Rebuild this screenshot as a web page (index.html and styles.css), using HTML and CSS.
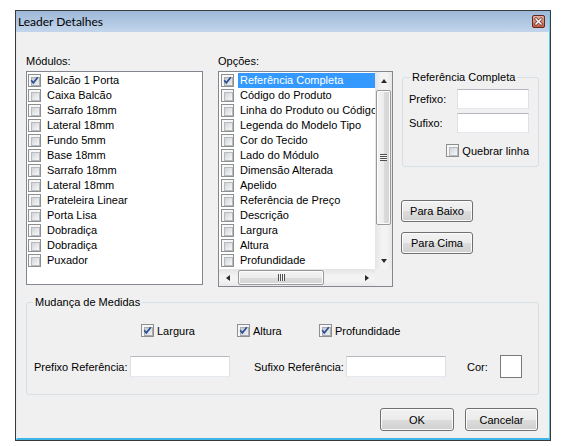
FILE: index.html
```html
<!DOCTYPE html>
<html lang="pt">
<head>
<meta charset="utf-8">
<title>Leader Detalhes</title>
<link rel="stylesheet" href="styles.css">
</head>
<body>
<div class="window">
  <div class="titlebar">
    <span class="title">Leader Detalhes</span>
    <span class="close">
      <svg width="13" height="13" viewBox="0 0 13 13">
        <defs>
          <linearGradient id="cg" x1="0" y1="0" x2="0" y2="1">
            <stop offset="0" stop-color="#e7b0a2"/>
            <stop offset="0.5" stop-color="#d98a75"/>
            <stop offset="1" stop-color="#c4563e"/>
          </linearGradient>
        </defs>
        <rect x="0.5" y="0.5" width="12" height="12" rx="1.5" fill="url(#cg)" stroke="#5e2a20"/>
        <path d="M4 4 L9 9 M9 4 L4 9" stroke="#6a3a30" stroke-width="3" stroke-linecap="square"/>
        <path d="M4 4 L9 9 M9 4 L4 9" stroke="#ffffff" stroke-width="1.5" stroke-linecap="square"/>
      </svg>
    </span>
  </div>
  <div class="client">
    <div class="top">
      <div class="col-mod">
        <div class="label">Módulos:</div>
        <div class="list list-mod">
          <div class="item"><span class="cb checked"><svg class="tick" width="13" height="13" viewBox="0 0 13 13"><path d="M3.2 6.3 L5.3 8.8 L9.8 3.2" fill="none" stroke="#2c4f93" stroke-width="1.7"/></svg></span><span class="txt">Balcão 1 Porta</span></div>
          <div class="item"><span class="cb"></span><span class="txt">Caixa Balcão</span></div>
          <div class="item"><span class="cb"></span><span class="txt">Sarrafo 18mm</span></div>
          <div class="item"><span class="cb"></span><span class="txt">Lateral 18mm</span></div>
          <div class="item"><span class="cb"></span><span class="txt">Fundo 5mm</span></div>
          <div class="item"><span class="cb"></span><span class="txt">Base 18mm</span></div>
          <div class="item"><span class="cb"></span><span class="txt">Sarrafo 18mm</span></div>
          <div class="item"><span class="cb"></span><span class="txt">Lateral 18mm</span></div>
          <div class="item"><span class="cb"></span><span class="txt">Prateleira Linear</span></div>
          <div class="item"><span class="cb"></span><span class="txt">Porta Lisa</span></div>
          <div class="item"><span class="cb"></span><span class="txt">Dobradiça</span></div>
          <div class="item"><span class="cb"></span><span class="txt">Dobradiça</span></div>
          <div class="item"><span class="cb"></span><span class="txt">Puxador</span></div>
        </div>
      </div>
      <div class="col-opt">
        <div class="label">Opções:</div>
        <div class="list list-opt">
          <div class="opt-items">
            <div class="item sel"><span class="cb checked"><svg class="tick" width="13" height="13" viewBox="0 0 13 13"><path d="M3.2 6.3 L5.3 8.8 L9.8 3.2" fill="none" stroke="#2c4f93" stroke-width="1.7"/></svg></span><span class="txt">Referência Completa</span></div>
            <div class="item"><span class="cb"></span><span class="txt">Código do Produto</span></div>
            <div class="item"><span class="cb"></span><span class="txt">Linha do Produto ou Código</span></div>
            <div class="item"><span class="cb"></span><span class="txt">Legenda do Modelo Tipo</span></div>
            <div class="item"><span class="cb"></span><span class="txt">Cor do Tecido</span></div>
            <div class="item"><span class="cb"></span><span class="txt">Lado do Módulo</span></div>
            <div class="item"><span class="cb"></span><span class="txt">Dimensão Alterada</span></div>
            <div class="item"><span class="cb"></span><span class="txt">Apelido</span></div>
            <div class="item"><span class="cb"></span><span class="txt">Referência de Preço</span></div>
            <div class="item"><span class="cb"></span><span class="txt">Descrição</span></div>
            <div class="item"><span class="cb"></span><span class="txt">Largura</span></div>
            <div class="item"><span class="cb"></span><span class="txt">Altura</span></div>
            <div class="item"><span class="cb"></span><span class="txt">Profundidade</span></div>
          </div>
          <div class="vscroll">
            <div class="arrow up"></div>
            <div class="vthumb"><span class="grip-v"></span></div>
            <div class="spacer"></div>
            <div class="arrow down"></div>
          </div>
          <div class="hscroll">
            <div class="arrow left"></div>
            <div class="hthumb"><span class="grip-h"></span></div>
            <div class="spacer"></div>
            <div class="arrow right"></div>
          </div>
          <div class="corner"></div>
        </div>
      </div>
      <div class="col-ref">
        <fieldset class="group ref-group">
          <legend>Referência Completa</legend>
          <div class="frow"><span class="flabel">Prefixo:</span><span class="textbox tb-small"></span></div>
          <div class="frow"><span class="flabel">Sufixo:</span><span class="textbox tb-small"></span></div>
          <div class="crow"><span class="cb"></span><span>Quebrar linha</span></div>
        </fieldset>
        <div class="move">
          <button class="btn btn-move">Para Baixo</button>
          <button class="btn btn-move">Para Cima</button>
        </div>
      </div>
    </div>
    <fieldset class="group medidas">
      <legend>Mudança de Medidas</legend>
      <div class="mrow1">
        <div class="mcheck mc1"><span class="cb checked"><svg class="tick" width="13" height="13" viewBox="0 0 13 13"><path d="M3.2 6.3 L5.3 8.8 L9.8 3.2" fill="none" stroke="#2c4f93" stroke-width="1.7"/></svg></span><span>Largura</span></div>
        <div class="mcheck mc2"><span class="cb checked"><svg class="tick" width="13" height="13" viewBox="0 0 13 13"><path d="M3.2 6.3 L5.3 8.8 L9.8 3.2" fill="none" stroke="#2c4f93" stroke-width="1.7"/></svg></span><span>Altura</span></div>
        <div class="mcheck"><span class="cb checked"><svg class="tick" width="13" height="13" viewBox="0 0 13 13"><path d="M3.2 6.3 L5.3 8.8 L9.8 3.2" fill="none" stroke="#2c4f93" stroke-width="1.7"/></svg></span><span>Profundidade</span></div>
      </div>
      <div class="mrow2">
        <span class="l1">Prefixo Referência:</span>
        <span class="textbox tb-wide"></span>
        <span class="l2">Sufixo Referência:</span>
        <span class="textbox tb-wide"></span>
        <span class="l3">Cor:</span>
        <span class="colorbox"></span>
      </div>
    </fieldset>
    <div class="actions">
      <button class="btn btn-ok">OK</button>
      <button class="btn btn-cancel">Cancelar</button>
    </div>
  </div>
</div>
</body>
</html>
```
FILE: styles.css
```css
* { box-sizing: border-box; }

body {
  margin: 0;
  background: #ffffff;
  font-family: "Liberation Sans", Arial, sans-serif;
  font-size: 11px;
  color: #000;
}

.window {
  margin: 10px 0 0 15px;
  width: 536px;
  height: 431px;
  border: 1px solid #3a3a3a;
  background: #f0f0f0;
  display: flex;
  flex-direction: column;
}

.titlebar {
  flex: none;
  height: 21px;
  background: linear-gradient(#9db8d8, #c2d5eb);
  display: flex;
  align-items: center;
  justify-content: space-between;
  padding: 0 4px 0 2px;
  border-right: 1px solid #6fc7ec;
}

.title {
  font-family: Lato, "Liberation Sans", sans-serif;
  font-size: 12px;
  color: #000;
}

.close { display: flex; }

.client {
  flex: 1;
  border-left: 1px solid #e6ecf2;
  border-right: 1px solid #55c1ec;
  border-bottom: 2px solid #3fb4e6;
}

.top {
  display: flex;
  padding: 23px 0 0 9px;
}

.col-mod { width: 177px; margin-right: 15px; }
.col-opt { width: 175px; margin-right: 9px; }
.col-ref { width: 137px; padding-top: 16px; }

.label {
  height: 13px;
  line-height: 13px;
  margin-bottom: 3px;
}

.list {
  background: #fff;
  border: 1px solid #828790;
}

.list-mod { height: 214px; padding-top: 1px; }

.list-opt {
  height: 216px;
  display: grid;
  grid-template-columns: 1fr 17px;
  grid-template-rows: 1fr 17px;
}

.opt-items { padding-top: 1px; overflow: hidden; }

.item {
  height: 15px;
  display: flex;
  align-items: center;
  white-space: nowrap;
}

.list-mod .cb { margin-left: 1px; }
.list-opt .cb { margin-left: 2px; }

.item .txt {
  flex: 1;
  margin-left: 4px;
  padding-left: 2px;
  height: 15px;
  line-height: 15px;
  overflow: hidden;
}

.item.sel .txt { background: #3399ff; color: #fff; }

/* checkbox */
.cb {
  flex: none;
  position: relative;
  width: 13px;
  height: 13px;
  border: 1px solid #8e8f8f;
  background: #f7f7f7;
  padding: 2px;
}
.cb::before {
  content: "";
  display: block;
  width: 7px;
  height: 7px;
  border: 1px solid #b7babe;
  background: linear-gradient(135deg, #d0d3d7, #f8f8f8);
}
.cb.checked::before {
  border-color: #a9adb3;
  background: linear-gradient(135deg, #c9ccd1, #eef0f2);
}
.tick {
  position: absolute;
  left: -1px;
  top: -1px;
}

/* scrollbars */
.vscroll {
  display: flex;
  flex-direction: column;
  background: linear-gradient(90deg, #e4e4e4, #f3f3f3 40%, #f3f3f3 70%, #e8e8e8);
}
.hscroll {
  display: flex;
  background: linear-gradient(#e4e4e4, #f3f3f3 40%, #f3f3f3 70%, #e8e8e8);
}
.corner { background: #f0f0f0; }
.spacer { flex: 1; }

.arrow {
  flex: none;
  width: 17px;
  height: 17px;
  display: flex;
  align-items: center;
  justify-content: center;
}
.arrow::before { content: ""; width: 0; height: 0; }
.arrow.up::before {
  border-left: 3px solid transparent;
  border-right: 3px solid transparent;
  border-bottom: 4px solid #2a2a2a;
}
.arrow.down::before {
  border-left: 3px solid transparent;
  border-right: 3px solid transparent;
  border-top: 4px solid #2a2a2a;
}
.arrow.left::before {
  border-top: 3px solid transparent;
  border-bottom: 3px solid transparent;
  border-right: 4px solid #2a2a2a;
}
.arrow.right::before {
  border-top: 3px solid transparent;
  border-bottom: 3px solid transparent;
  border-left: 4px solid #2a2a2a;
}

.vthumb {
  flex: none;
  margin: 1px 1px 0 1px;
  height: 135px;
  border: 1px solid #999999;
  border-radius: 2px;
  background: linear-gradient(90deg, #f5f5f5, #ececec 50%, #dcdcdc 51%, #d4d4d4);
  box-shadow: inset 0 0 0 1px #fbfbfb;
  display: flex;
  align-items: center;
  justify-content: center;
}
.grip-v {
  width: 7px;
  height: 7px;
  background: repeating-linear-gradient(#4f4f4f 0 1px, #f6f6f6 1px 2px);
}
.hthumb {
  flex: none;
  margin: 1px 0 1px 2px;
  width: 86px;
  border: 1px solid #999999;
  border-radius: 2px;
  background: linear-gradient(#f5f5f5, #ececec 50%, #dcdcdc 51%, #d4d4d4);
  box-shadow: inset 0 0 0 1px #fbfbfb;
  display: flex;
  align-items: center;
  justify-content: center;
}
.grip-h {
  width: 7px;
  height: 7px;
  background: repeating-linear-gradient(90deg, #4f4f4f 0 1px, #f6f6f6 1px 2px);
}

/* group boxes */
.group {
  min-width: 0;
  border: 1px solid #d5dfe5;
  border-radius: 3px;
}
.group legend {
  padding: 0 2px;
  height: 13px;
  line-height: 13px;
}

.group.ref-group {
  width: 137px;
  margin: 0;
  padding: 5px 9px 8px 6px;
}
.ref-group legend { margin-left: 1px; }

.frow {
  display: flex;
  align-items: center;
  height: 20px;
}
.frow + .frow { margin-top: 4px; }
.flabel { width: 48px; }

.textbox {
  flex: none;
  background: #fff;
  border: 1px solid;
  border-color: #b5b8be #dde0e6 #e3e9ef #dde0e6;
}
.tb-small { width: 72px; height: 20px; }
.tb-wide { width: 100px; height: 21px; }

.crow {
  display: flex;
  justify-content: flex-end;
  align-items: center;
  height: 15px;
  margin-top: 10px;
}
.crow .cb { margin-right: 3px; }

.move {
  margin: 33px 0 0 -1px;
  display: flex;
  flex-direction: column;
  align-items: flex-start;
  gap: 10px;
}

.btn {
  font-family: inherit;
  font-size: 11px;
  color: #000;
  padding: 0;
  border: 1px solid #707070;
  border-radius: 3px;
  background: linear-gradient(#f2f2f2 0%, #ebebeb 50%, #dddddd 51%, #cfcfcf 100%);
  box-shadow: inset 0 0 0 1px #fbfbfb;
}
.btn-move { width: 72px; height: 22px; }
.btn-ok { width: 74px; height: 23px; }
.btn-cancel { width: 73px; height: 23px; }

/* medidas */
.group.medidas {
  margin: 9px 0 0 9px;
  width: 513px;
  padding: 0 0 16px 0;
}
.medidas legend { margin-left: 6px; }

.mrow1 {
  display: flex;
  align-items: center;
  height: 15px;
  margin-top: 14px;
  padding-left: 114px;
}
.mcheck { display: flex; align-items: center; }
.mcheck .cb { margin-right: 3px; }
.mc1 { width: 96px; }
.mc2 { width: 82px; }

.mrow2 {
  display: flex;
  align-items: center;
  height: 23px;
  margin-top: 17px;
  padding-left: 7px;
}
.l1 { width: 96px; }
.l2 { width: 92px; margin-left: 24px; }
.l3 { width: 33px; margin-left: 21px; }
.colorbox {
  width: 22px;
  height: 23px;
  background: #fff;
  border: 1px solid #7a7a7a;
}

.actions {
  display: flex;
  justify-content: flex-end;
  gap: 11px;
  margin-top: 13px;
  padding-right: 11px;
}
```
